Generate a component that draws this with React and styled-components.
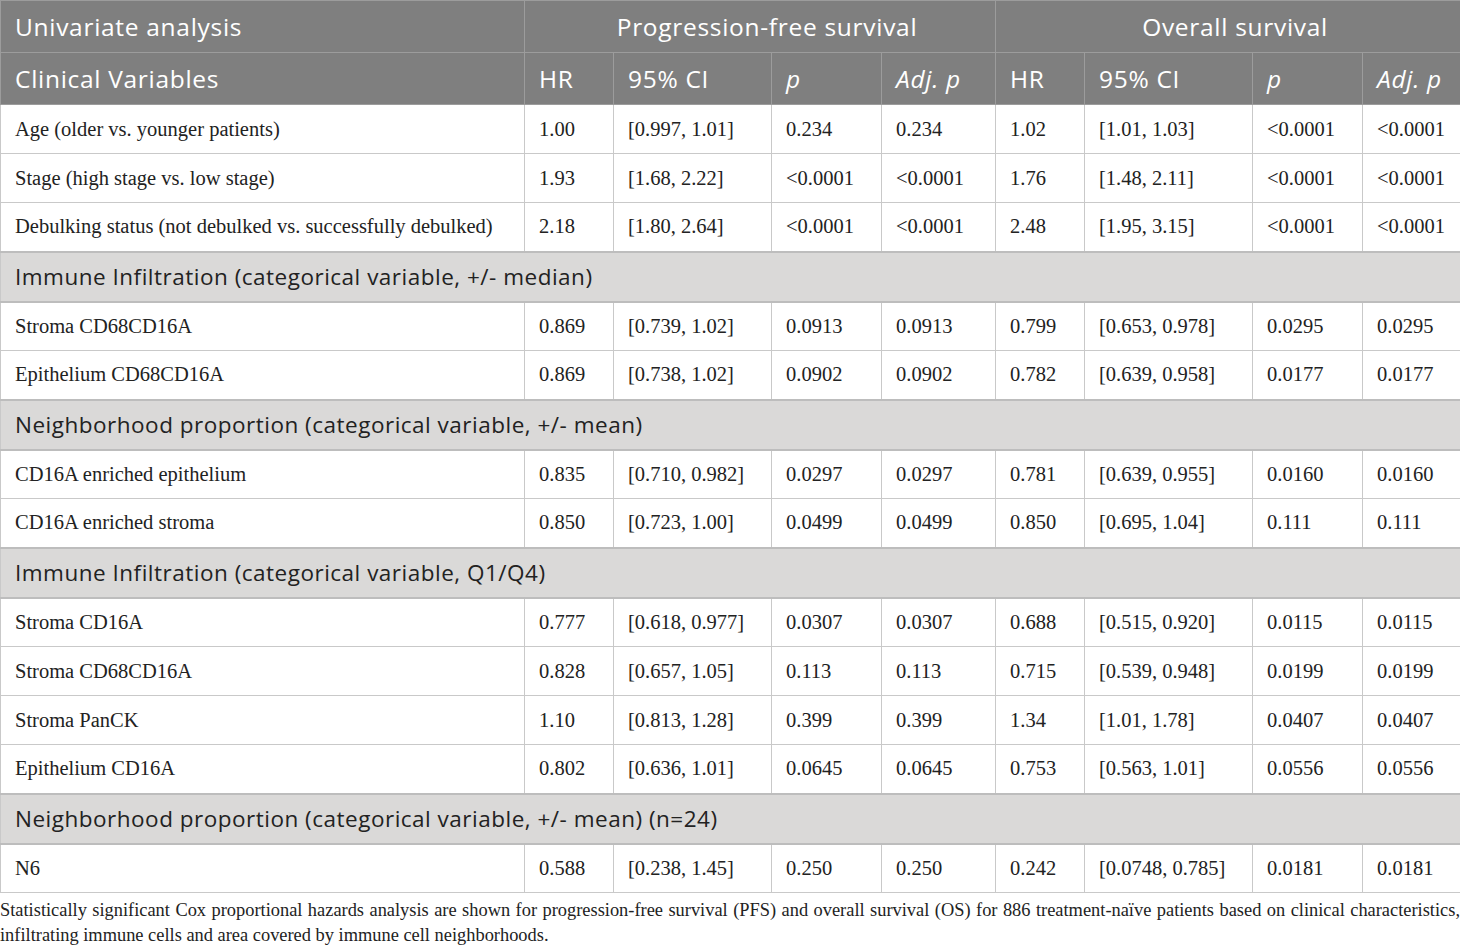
import React from "react";
import styled, { createGlobalStyle } from "styled-components";

const Global = createGlobalStyle`
  html, body { margin: 0; padding: 0; background: #ffffff; }
  body { font-family: "Liberation Serif", "Times New Roman", serif; color: #222; }
`;

const Wrap = styled.div`
  width: 1460px;
`;

const Table = styled.table`
  width: 1460px;
  border-collapse: collapse;
  table-layout: fixed;
`;

const HeadRow = styled.tr`
  height: 52px;
  background: #7f7f7f;
`;

const HeadCell = styled.th`
  font-family: "Open Sans", "Lato", sans-serif;
  font-weight: 400;
  font-size: 24.5px;
  letter-spacing: 0.7px;
  color: #ffffff;
  text-align: ${(p) => (p.$center ? "center" : "left")};
  padding: 0 0 0 14px;
  border: 1px solid #9c9c9c;
  font-style: ${(p) => (p.$italic ? "italic" : "normal")};
  white-space: nowrap;
`;

const DataRow = styled.tr`
  height: 49px;
  background: #ffffff;
`;

const Cell = styled.td`
  font-size: 20.5px;
  color: #222;
  padding: 0 0 0 14px;
  border: 1px solid #c9c9c9;
  white-space: nowrap;
`;

const SectionRow = styled.tr`
  height: 50px;
  background: #dad9d8;
`;

const SectionCell = styled.td`
  font-family: "Open Sans", "Lato", sans-serif;
  font-size: 22.5px;
  letter-spacing: 0.5px;
  color: #222;
  padding: 0 0 0 14px;
  border-top: 2px solid #bdbdbd;
  border-bottom: 2px solid #bdbdbd;
  border-left: 1px solid #c9c9c9;
  border-right: 1px solid #c9c9c9;
  white-space: nowrap;
`;

const Caption = styled.p`
  margin: 0;
  padding-top: 5px;
  font-size: 18.4px;
  line-height: 25px;
  text-align: justify;
  color: #222;
`;

const widths = [524, 89, 158, 110, 114, 89, 168, 110, 98];

const rows = [
  { type: "d", cells: ["Age (older vs. younger patients)", "1.00", "[0.997, 1.01]", "0.234", "0.234", "1.02", "[1.01, 1.03]", "<0.0001", "<0.0001"] },
  { type: "d", cells: ["Stage (high stage vs. low stage)", "1.93", "[1.68, 2.22]", "<0.0001", "<0.0001", "1.76", "[1.48, 2.11]", "<0.0001", "<0.0001"] },
  { type: "d", cells: ["Debulking status (not debulked vs. successfully debulked)", "2.18", "[1.80, 2.64]", "<0.0001", "<0.0001", "2.48", "[1.95, 3.15]", "<0.0001", "<0.0001"] },
  { type: "s", label: "Immune Infiltration (categorical variable, +/- median)" },
  { type: "d", cells: ["Stroma CD68CD16A", "0.869", "[0.739, 1.02]", "0.0913", "0.0913", "0.799", "[0.653, 0.978]", "0.0295", "0.0295"] },
  { type: "d", cells: ["Epithelium CD68CD16A", "0.869", "[0.738, 1.02]", "0.0902", "0.0902", "0.782", "[0.639, 0.958]", "0.0177", "0.0177"] },
  { type: "s", label: "Neighborhood proportion (categorical variable, +/- mean)" },
  { type: "d", cells: ["CD16A enriched epithelium", "0.835", "[0.710, 0.982]", "0.0297", "0.0297", "0.781", "[0.639, 0.955]", "0.0160", "0.0160"] },
  { type: "d", cells: ["CD16A enriched stroma", "0.850", "[0.723, 1.00]", "0.0499", "0.0499", "0.850", "[0.695, 1.04]", "0.111", "0.111"] },
  { type: "s", label: "Immune Infiltration (categorical variable, Q1/Q4)" },
  { type: "d", cells: ["Stroma CD16A", "0.777", "[0.618, 0.977]", "0.0307", "0.0307", "0.688", "[0.515, 0.920]", "0.0115", "0.0115"] },
  { type: "d", cells: ["Stroma CD68CD16A", "0.828", "[0.657, 1.05]", "0.113", "0.113", "0.715", "[0.539, 0.948]", "0.0199", "0.0199"] },
  { type: "d", cells: ["Stroma PanCK", "1.10", "[0.813, 1.28]", "0.399", "0.399", "1.34", "[1.01, 1.78]", "0.0407", "0.0407"] },
  { type: "d", cells: ["Epithelium CD16A", "0.802", "[0.636, 1.01]", "0.0645", "0.0645", "0.753", "[0.563, 1.01]", "0.0556", "0.0556"] },
  { type: "s", label: "Neighborhood proportion (categorical variable, +/- mean) (n=24)" },
  { type: "d", cells: ["N6", "0.588", "[0.238, 1.45]", "0.250", "0.250", "0.242", "[0.0748, 0.785]", "0.0181", "0.0181"] },
];

export default function App() {
  return (
    <Wrap>
      <Global />
      <Table>
        <colgroup>
          {widths.map((w, i) => (
            <col key={i} style={{ width: w }} />
          ))}
        </colgroup>
        <thead>
          <HeadRow>
            <HeadCell>Univariate analysis</HeadCell>
            <HeadCell colSpan={4} $center>Progression-free survival</HeadCell>
            <HeadCell colSpan={4} $center>Overall survival</HeadCell>
          </HeadRow>
          <HeadRow>
            <HeadCell>Clinical Variables</HeadCell>
            <HeadCell>HR</HeadCell>
            <HeadCell>95% CI</HeadCell>
            <HeadCell $italic>p</HeadCell>
            <HeadCell $italic>Adj. p</HeadCell>
            <HeadCell>HR</HeadCell>
            <HeadCell>95% CI</HeadCell>
            <HeadCell $italic>p</HeadCell>
            <HeadCell $italic>Adj. p</HeadCell>
          </HeadRow>
        </thead>
        <tbody>
          {rows.map((r, i) =>
            r.type === "s" ? (
              <SectionRow key={i}>
                <SectionCell colSpan={9}>{r.label}</SectionCell>
              </SectionRow>
            ) : (
              <DataRow key={i}>
                {r.cells.map((c, j) => (
                  <Cell key={j}>{c}</Cell>
                ))}
              </DataRow>
            )
          )}
        </tbody>
      </Table>
      <Caption>
        Statistically significant Cox proportional hazards analysis are shown for progression-free survival (PFS) and overall survival (OS) for 886 treatment-naïve patients based on clinical characteristics, infiltrating immune cells and area covered by immune cell neighborhoods.
      </Caption>
    </Wrap>
  );
}
